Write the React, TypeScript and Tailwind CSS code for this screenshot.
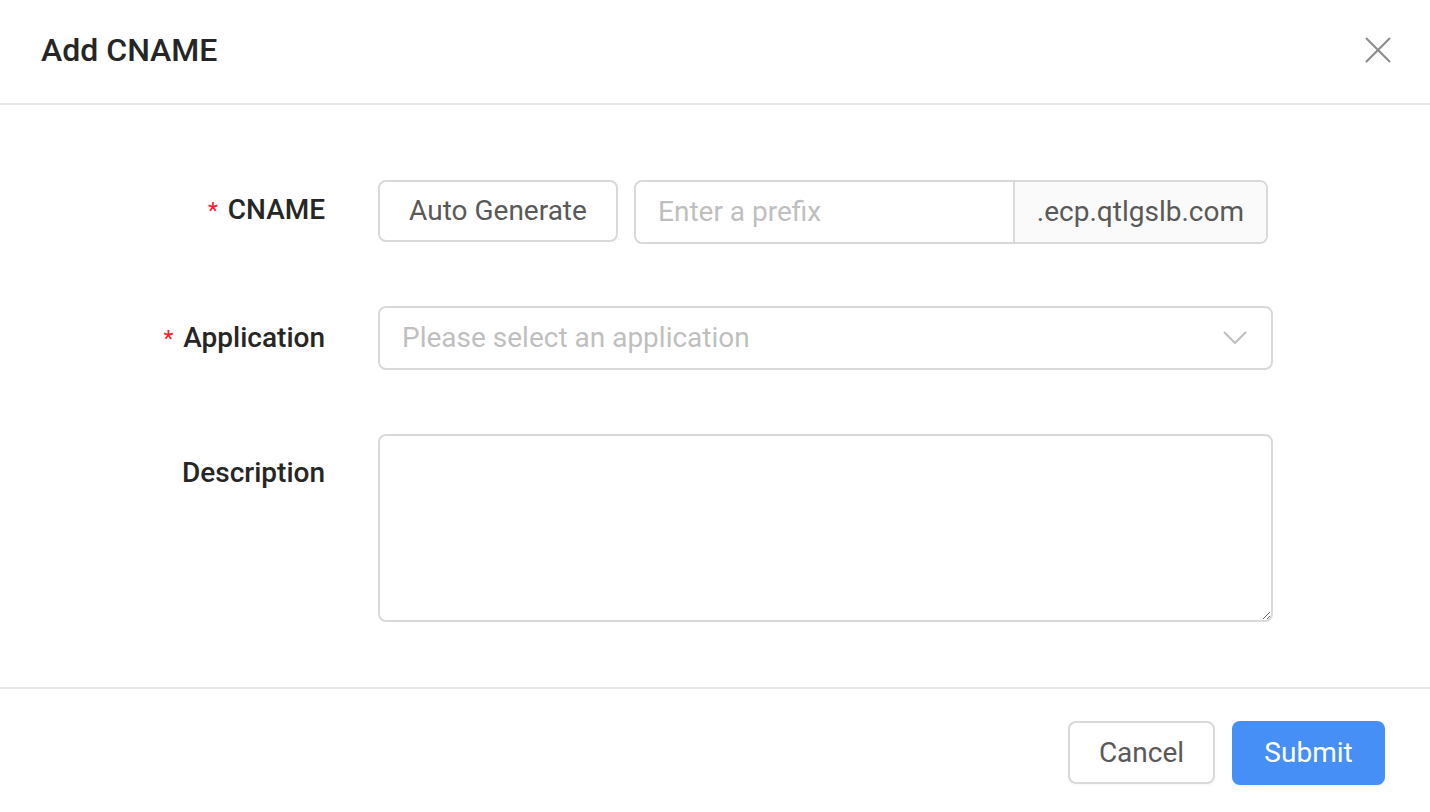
import { X } from 'lucide-react';

const font = { fontFamily: 'Roboto, "Liberation Sans", sans-serif' };

function Label({ text, required, className = '' }: { text: string; required?: boolean; className?: string }) {
  return (
    <div className={`flex items-center justify-end text-[28px] font-medium text-[#262626] ${className}`}>
      {required && <span className="mr-[10px] text-[22px] text-[#f5222d]">*</span>}
      {text}
    </div>
  );
}

export default function App() {
  return (
    <div className="flex h-[812px] w-[1430px] flex-col bg-white" style={font}>
      <div className="flex h-[105px] items-center justify-between border-b-2 border-[#e8e8e8] pb-[4px] pl-[41px] pr-[29px]">
        <h1 className="text-[32px] font-medium leading-none text-[#262626]">Add CNAME</h1>
        <button className="text-[#8c8c8c]">
          <X size={46} strokeWidth={1.1} />
        </button>
      </div>

      <div className="grid flex-1 grid-cols-[325px_895px] content-start gap-x-[53px] gap-y-[63px] border-b-2 border-[#e8e8e8] pt-[75px]">
        <Label text="CNAME" required className="h-[63px] pb-[3px]" />
        <div className="flex gap-[16px]">
          <button className="h-[62px] w-[240px] rounded-[8px] border-2 border-[#d9d9d9] text-[28px] text-[#595959]">
            Auto Generate
          </button>
          <div className="flex h-[64px] w-[634px] overflow-hidden rounded-[8px] border-2 border-[#d9d9d9]">
            <input
              placeholder="Enter a prefix"
              className="min-w-0 flex-1 px-[22px] text-[28px] text-[#262626] outline-none placeholder:text-[#bfbfbf]"
            />
            <div className="flex items-center border-l-2 border-[#d9d9d9] bg-[#fafafa] px-[22px] text-[28px] text-[#595959]">
              .ecp.qtlgslb.com
            </div>
          </div>
        </div>

        <Label text="Application" required className="h-[64px] pb-[2px]" />
        <div className="-mt-px flex h-[64px] items-center justify-between rounded-[8px] border-2 border-[#d9d9d9] pl-[22px] pr-[24px]">
          <span className="text-[28px] text-[#bfbfbf]">Please select an application</span>
          <svg width="24" height="14" viewBox="0 0 24 14" fill="none" stroke="#bfbfbf" strokeWidth="2">
            <polyline points="1,1 12,12 23,1" />
          </svg>
        </div>

        <Label text="Description" className="h-[64px] items-start pt-[18px]" />
        <textarea className="mb-[64px] h-[188px] resize-y rounded-[8px] border-2 border-[#d9d9d9] px-[22px] py-[10px] text-[28px] outline-none" />
      </div>

      <div className="flex h-[123px] items-center justify-end gap-[17px] pt-[4px] pr-[45px]">
        <button className="h-[63px] w-[147px] rounded-[8px] border-2 border-[#d9d9d9] bg-white text-[28px] text-[#595959] shadow-[0_2px_0_rgba(0,0,0,0.02)]">
          Cancel
        </button>
        <button className="h-[64px] w-[153px] rounded-[8px] bg-[#458ff6] text-[28px] text-white shadow-[0_2px_0_rgba(0,0,0,0.045)]">
          Submit
        </button>
      </div>
    </div>
  );
}
